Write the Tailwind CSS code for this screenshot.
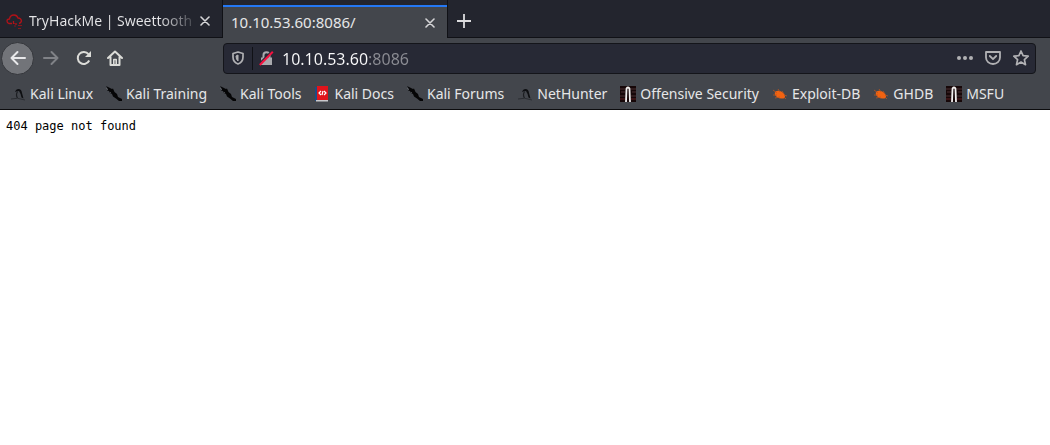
<!DOCTYPE html>
<html lang="en">
	<head>
		<meta charset="UTF-8" />
		<meta name="viewport" content="width=device-width, initial-scale=1.0" />
		<script src="https://cdn.jsdelivr.net/npm/@tailwindcss/browser@4"></script>
		<title>10.10.53.60:8086/</title>
	</head>
	<body class="bg-white font-['Noto_Sans',sans-serif] text-sm text-[#e6e6e8]">
		<!-- Shared bookmark icons -->
		<svg class="hidden">
			<symbol id="kali" viewBox="0 0 16 16">
				<path d="M5 6Q6 3 8.500 3Q11.500 3 12 7L13.500 12.500L11.500 11.500Q10.500 7 9 5Q7 5 5 6Z" fill="#0e0f12" />
				<path d="M7.500 5.500Q5.500 9 7.500 12" fill="none" stroke="#1c1e22" stroke-width="1.200" />
				<path d="M1 13Q7 11 15 14" fill="none" stroke="#2b2d32" stroke-width="1" />
			</symbol>
			<symbol id="dagger" viewBox="0 0 16 16">
				<path d="M0 0L3 1.500L6 3L7 2.500L8.500 6L11 8L12 11L16 13V15H13L10 12.500L7 10.500L6 8L4 7L3 5L1 4.500L2 3Z" fill="#050506" />
				<path d="M0 2L2 4M4 6L5 7" stroke="#6d7076" stroke-width="0.600" />
			</symbol>
			<symbol id="docs" viewBox="0 0 14 16">
				<path d="M0 1H2V15H0Z" fill="#1d4c86" />
				<path d="M2 0H13V14H2Z" fill="#e0141b" />
				<path d="M1 14H13V15.500H1Z" fill="#c9c9cc" />
				<path d="M6 5L4 7L6 9M9 5L11 7L9 9M8 5L7 9" fill="none" stroke="#fff" stroke-width="1.200" />
			</symbol>
			<symbol id="offsec" viewBox="0 0 16 16">
				<path d="M0 0H16V16H0Z" fill="#160708" />
				<path d="M0 3H5M1 6H5M0 10H5M11 3H16M12 6H16M11 10H16" stroke="#4a3032" stroke-width="1" />
				<path d="M0 13H5M11 13H16" stroke="#3a1214" stroke-width="2" />
				<path d="M6 16L6.500 2.500Q8 0.500 9.500 2.500L10 16" fill="none" stroke="#f1eeee" stroke-width="1.800" />
			</symbol>
			<symbol id="bug" viewBox="0 0 16 16">
				<path d="M3 6Q6 3.500 10 6Q13.500 8 13 12Q8 13.500 5 11Q2 9 3 6Z" fill="#f26311" />
				<path d="M1 4L5 7M6 3L8 6M10 5L12 8M1 9L5 9M3 12L8 11M12 9L15 10M12 11L14 13" fill="none" stroke="#b9561f" stroke-width="0.800" />
			</symbol>
			<symbol id="close" viewBox="0 0 10 10">
				<path d="M1 1L9 9M9 1L1 9" fill="none" stroke="#d5d5d7" stroke-width="1.600" stroke-linecap="round" />
			</symbol>
		</svg>

		<header class="bg-[#43464c]">
			<!-- Tabs -->
			<div class="flex h-[38px] bg-[#23252e]">
				<div class="flex w-[222px] items-center border-b border-[#101116] pl-1.5 pr-[10px] pt-[5px]">
					<svg class="mr-1.5 h-[17px] w-[17px] shrink-0" viewBox="0 0 17 17" fill="none" stroke="#b01218">
						<path d="M6 10.500H3Q1 10 1 8Q1 6 3.500 6Q4 2 8 2Q11 2 12 5Q15 5 15.500 8Q15 10 13 10.500M7.500 8V11M10 10V12" stroke-width="1.300" />
						<path d="M8 10.500H10M12 12.500H16M8 13H10M12 15.500H15" stroke-width="1.200" stroke="#86161c" />
					</svg>
					<a href="#" class="flex-1 whitespace-nowrap bg-[linear-gradient(to_right,#e6e6e8_130px,#3a3c44_166px)] bg-clip-text text-transparent">TryHackMe | Sweettooth</a>
					<button aria-label="Close tab" class="p-0.5"><svg class="size-[10px]"><use href="#close" /></svg></button>
				</div>
				<div class="flex w-[226px] items-center border-x border-[#101116] pt-[5px]">
					<div class="flex h-[33px] w-full items-center border-t-2 border-[#2478f5] bg-[#43464c] pl-2 pr-[10px]">
						<a href="#" class="flex-1 text-[15px]">10.10.53.60:8086/</a>
						<button aria-label="Close tab" class="p-0.5"><svg class="size-[10px]"><use href="#close" /></svg></button>
					</div>
				</div>
				<div class="flex flex-1 items-center border-b border-[#101116] pl-2 pt-[5px]">
					<button aria-label="New tab">
						<svg class="size-4" viewBox="0 0 16 16"><path d="M8 1V15M1 8H15" stroke="#dcdcde" stroke-width="1.800" /></svg>
					</button>
				</div>
			</div>

			<!-- Navigation bar -->
			<nav class="flex h-10 items-center pl-px pr-[14px]">
				<button aria-label="Back" class="flex size-[33px] items-center justify-center rounded-full border border-[#34363b] bg-[#727479]">
					<svg class="size-4" viewBox="0 0 16 16" fill="none" stroke="#e8e8ea" stroke-width="2" stroke-linecap="round" stroke-linejoin="round"><path d="M15 8H1.500M7.500 2L1.500 8L7.500 14" /></svg>
				</button>
				<button aria-label="Forward" class="flex w-[34px] justify-center">
					<svg class="size-4" viewBox="0 0 16 16" fill="none" stroke="#808287" stroke-width="2" stroke-linecap="round" stroke-linejoin="round"><path d="M1 8H14.500M8.500 2L14.500 8L8.500 14" /></svg>
				</button>
				<button aria-label="Reload" class="flex w-[31px] justify-center">
					<svg class="size-4" viewBox="0 0 16 16" fill="none" stroke="#dcdcd8" stroke-width="2"><path d="M13.200 10.500A6 6 0 1 1 12.500 4.200" /><path d="M15 1V7H9Z" fill="#dcdcd8" stroke="none" /></svg>
				</button>
				<button aria-label="Home" class="flex w-8 justify-center">
					<svg class="size-4" viewBox="0 0 16 16" fill="none" stroke="#dcdcd8" stroke-width="2" stroke-linecap="round" stroke-linejoin="round"><path d="M1 8L8 1.500L15 8M3.500 7V15H12.500V7" /><path d="M6.800 15V9.500H9.200V15" stroke-width="1.600" /></svg>
				</button>
				<div class="ml-[92px] flex h-[31px] flex-1 items-center rounded border border-[#14151a] bg-[#272935] pr-1.5">
					<button aria-label="Tracking protection" class="flex h-[23px] w-[29px] items-center justify-center border-r border-[#101116]">
						<svg class="h-[14px] w-3" viewBox="0 0 12 14" fill="none" stroke="#b1b1b4"><path d="M6 1L11 2.500V6Q11 11 6 13Q1 11 1 6V2.500Z" stroke-width="1.700" stroke-linejoin="round" /><path d="M6 4V10Q4 8.500 4 5Z" fill="#b1b1b4" stroke-width="1" /></svg>
					</button>
					<button aria-label="Connection is not secure" class="ml-1.5 mr-2">
						<svg class="size-[15px]" viewBox="0 0 15 15"><path d="M4.500 8V4Q4.500 1.300 7.500 1.300T10.500 4V8" fill="none" stroke="#a9a9ad" stroke-width="2" /><path d="M2 6.500H13V14H2Z" fill="#a9a9ad" /><path d="M0 12.800L12.800 0" stroke="#272935" stroke-width="1.500" /><path d="M0.800 14L13.800 0.800" stroke="#f5103f" stroke-width="2" /></svg>
					</button>
					<input type="text" aria-label="Address" value="10.10.53.60:8086" class="min-w-0 flex-1 bg-[linear-gradient(to_right,#f9f9fa_86px,#8b8c93_86px)] bg-clip-text pt-0.5 text-base text-transparent outline-none" />
					<button aria-label="Page actions" class="mr-3">
						<svg class="size-4" viewBox="0 0 16 16" fill="#b1b1b4"><circle cx="2" cy="8" r="2" /><circle cx="8" cy="8" r="2" /><circle cx="14" cy="8" r="2" /></svg>
					</button>
					<button aria-label="Save to Pocket" class="mr-3">
						<svg class="size-4" viewBox="0 0 16 16" fill="none" stroke="#b1b1b4" stroke-width="1.800" stroke-linecap="round" stroke-linejoin="round"><path d="M1 2H15V7.500A7 6.500 0 0 1 1 7.500Z" /><path d="M4.800 6L8 9.200L11.200 6" /></svg>
					</button>
					<button aria-label="Bookmark this page">
						<svg class="size-4" viewBox="0 0 16 16" fill="none" stroke="#b1b1b4" stroke-width="1.700" stroke-linejoin="round"><path d="M8 1L10.100 5.700L15.200 6.200L11.400 9.600L12.500 14.700L8 12.100L3.500 14.700L4.600 9.600L0.800 6.200L5.900 5.700Z" /></svg>
					</button>
				</div>
			</nav>

			<!-- Bookmarks -->
			<div class="flex h-8 items-center gap-[13px] overflow-hidden whitespace-nowrap border-b border-[#0c0c0e] pl-[10px]">
				<a href="#" class="flex items-center gap-1"><svg class="size-4"><use href="#kali" /></svg>Kali Linux</a>
				<a href="#" class="flex items-center gap-1"><svg class="size-4"><use href="#dagger" /></svg>Kali Training</a>
				<a href="#" class="flex items-center gap-1"><svg class="size-4"><use href="#dagger" /></svg>Kali Tools</a>
				<a href="#" class="flex items-center gap-1"><svg class="size-4"><use href="#docs" /></svg>Kali Docs</a>
				<a href="#" class="flex items-center gap-1"><svg class="size-4"><use href="#dagger" /></svg>Kali Forums</a>
				<a href="#" class="flex items-center gap-1"><svg class="size-4"><use href="#kali" /></svg>NetHunter</a>
				<a href="#" class="flex items-center gap-1"><svg class="size-4"><use href="#offsec" /></svg>Offensive Security</a>
				<a href="#" class="flex items-center gap-1"><svg class="size-4"><use href="#bug" /></svg>Exploit-DB</a>
				<a href="#" class="flex items-center gap-1"><svg class="size-4"><use href="#bug" /></svg>GHDB</a>
				<a href="#" class="flex items-center gap-1"><svg class="size-4"><use href="#offsec" /></svg>MSFU</a>
			</div>
		</header>

		<main class="px-1.5 py-2">
			<pre class="font-['DejaVu_Sans_Mono',monospace] text-xs text-black">404 page not found</pre>
		</main>
	</body>
</html>
